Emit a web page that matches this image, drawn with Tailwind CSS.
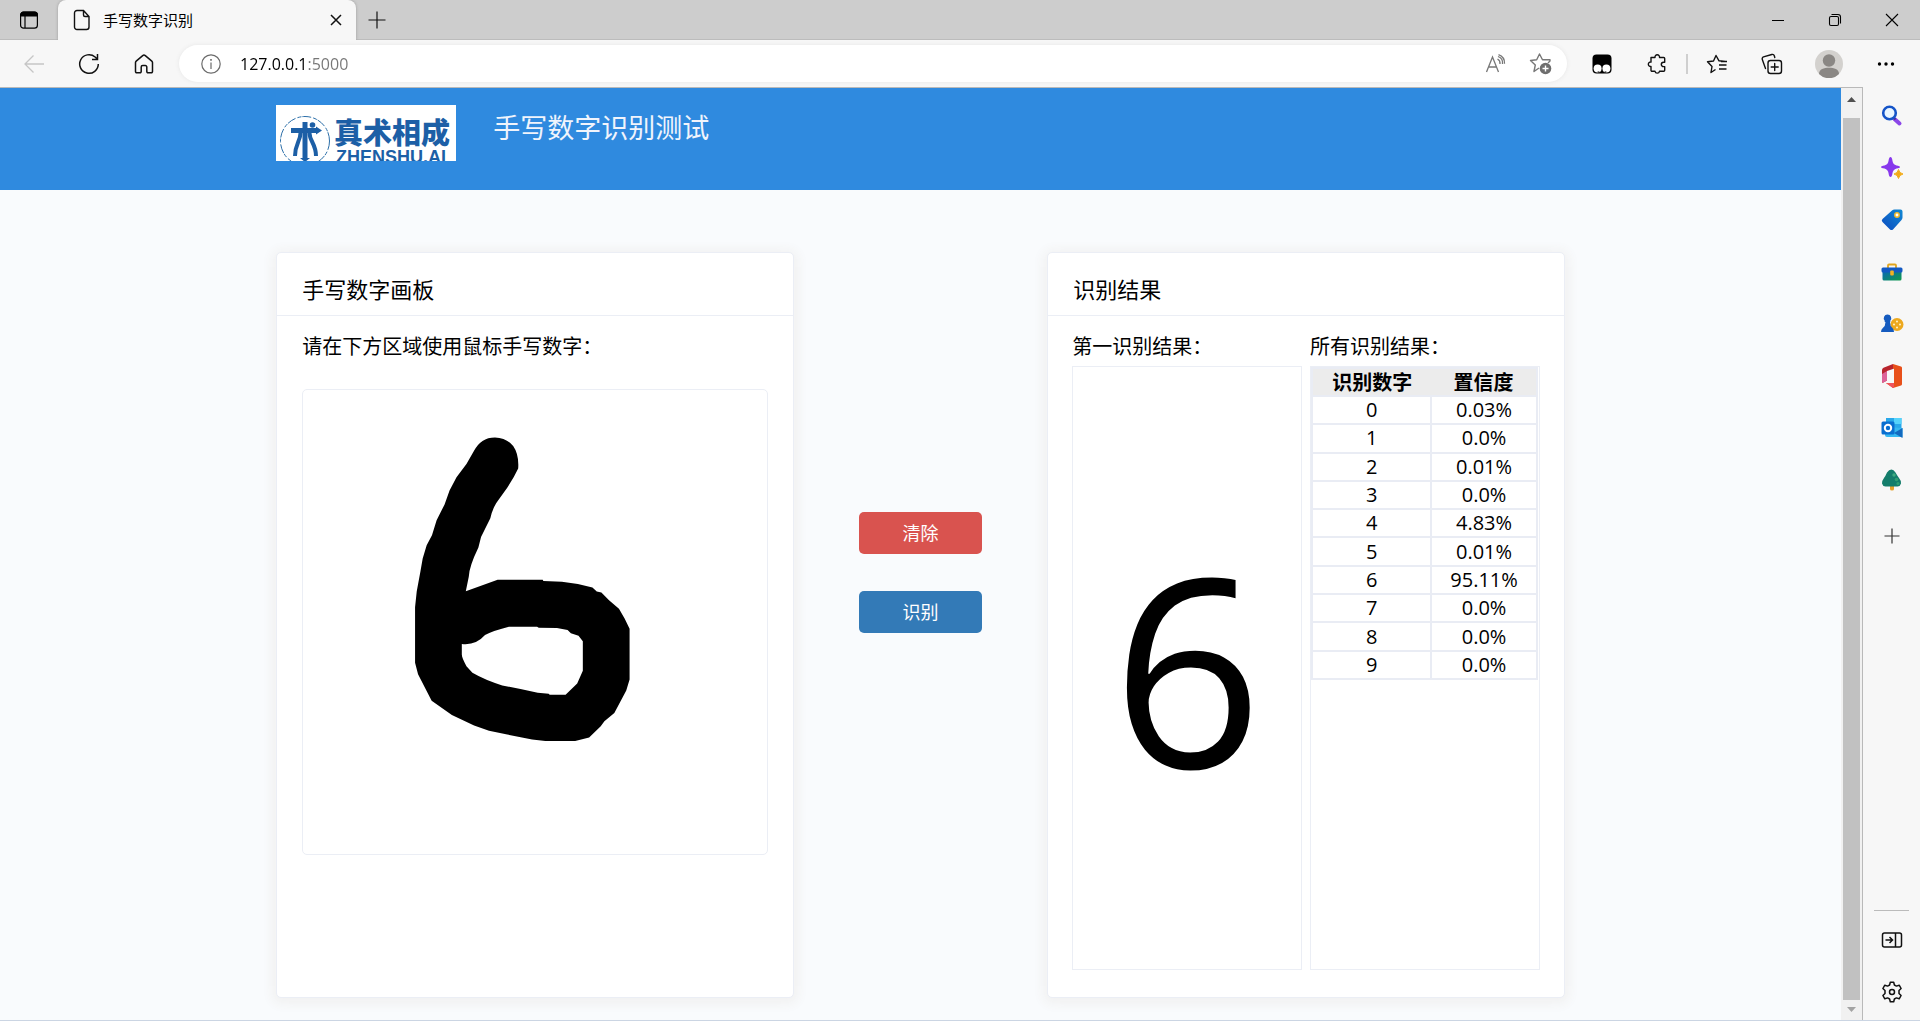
<!DOCTYPE html>
<html lang="zh-CN">
<head>
<meta charset="utf-8">
<meta name="viewport" content="width=device-width, initial-scale=1">
<title>手写数字识别</title>
<script src="https://cdn.jsdelivr.net/npm/@tailwindcss/browser@4"></script>
</head>
<body class="flex h-screen flex-col overflow-hidden bg-[#f7f7f7] font-['Open_Sans','Noto_Sans_CJK_SC',sans-serif] text-black">

<!-- Tab strip -->
<div class="flex h-10 shrink-0 items-stretch bg-[#cdcdcd] shadow-[inset_0_-1px_0_#bcbcbc]">
  <button aria-label="标签页操作" class="flex w-[58px] items-center justify-center">
    <svg width="20" height="20" viewBox="0 0 20 20" fill="none" stroke="#000" stroke-width="1.2"><rect x="1.6" y="2.2" width="16.8" height="16" rx="3"/><path d="M1.6 6V5a3 3 0 0 1 3-3h10.800a3 3 0 0 1 3 3v1z" fill="#000"/><path d="M6 6v12"/></svg>
  </button>
  <div class="flex w-[298px] items-center rounded-t-lg bg-[#f7f7f7] pr-2 pl-[15px] shadow-[0_0_3px_#999] [clip-path:inset(0_-4px_0_-4px)]">
    <svg class="shrink-0" width="18" height="22" viewBox="0 0 18 22" fill="none" stroke="#111" stroke-width="1.4"><path d="M4 1.500h6.500l5.500 6V18a2.500 2.500 0 0 1-2.500 2.500H4A2.500 2.500 0 0 1 1.500 18V4A2.500 2.500 0 0 1 4 1.500zM10.500 1.500v4.500a1.500 1.500 0 0 0 1.500 1.500h4"/></svg>
    <span class="flex-1 pl-3 text-[15px] leading-5">手写数字识别</span>
    <button aria-label="关闭标签页" class="flex size-6 items-center justify-center">
      <svg width="12" height="12" viewBox="0 0 12 12" stroke="#111" stroke-width="1.500"><path d="M1 1l10 10M11 1L1 11"/></svg>
    </button>
  </div>
  <button aria-label="新建标签页" class="flex w-[42px] items-center justify-center">
    <svg width="18" height="18" viewBox="0 0 18 18" stroke="#111" stroke-width="1.200"><path d="M9 .5v17M.5 9h17"/></svg>
  </button>
  <div class="flex flex-1 justify-end">
    <button aria-label="最小化" class="flex w-[57px] items-center justify-center"><svg width="12" height="12" viewBox="0 0 12 12" stroke="#000"><path d="M0 6.500h12"/></svg></button>
    <button aria-label="还原" class="flex w-[57px] items-center justify-center"><svg width="14" height="14" viewBox="0 0 14 14" fill="none" stroke="#000" stroke-width="1.100"><rect x="1.500" y="3.500" width="9" height="9" rx="1.500"/><path d="M3.500 1.500h6.500a2.500 2.500 0 0 1 2.500 2.500v6.500"/></svg></button>
    <button aria-label="关闭" class="flex w-[57px] items-center justify-center"><svg width="14" height="14" viewBox="0 0 14 14" stroke="#000" stroke-width="1.100"><path d="M1 1l12 12M13 1L1 13"/></svg></button>
  </div>
</div>

<!-- Toolbar -->
<div class="flex h-[47px] shrink-0 items-center gap-[15px] px-[14px]">
  <button aria-label="后退" class="flex w-10 justify-center"><svg width="22" height="20" viewBox="0 0 22 20" fill="none" stroke="#c6c6c6" stroke-width="1.300"><path d="M21 10H2M10.500 1.500L2 10l8.500 8.500"/></svg></button>
  <button aria-label="刷新" class="flex w-10 justify-center"><svg width="22" height="22" viewBox="0 0 22 22" fill="none" stroke="#111" stroke-width="1.500"><path d="M20.300 11a9.300 9.300 0 1 1-3.200-7l2.400 2.300M19.500 1v5.500H14"/></svg></button>
  <button aria-label="主页" class="flex w-10 justify-center"><svg width="20" height="20" viewBox="0 0 20 20" fill="none" stroke="#111" stroke-width="1.500" stroke-linejoin="round"><path d="M1.500 8.600a2 2 0 0 1 .700-1.500L8.700 1.600a2 2 0 0 1 2.600 0l6.500 5.500a2 2 0 0 1 .700 1.500v8.900a1.200 1.200 0 0 1-1.200 1.200H14a1.200 1.200 0 0 1-1.200-1.200V13a1.500 1.500 0 0 0-1.500-1.500H8.700A1.500 1.500 0 0 0 7.200 13v4.500A1.200 1.200 0 0 1 6 18.700H2.700a1.200 1.200 0 0 1-1.200-1.200z"/></svg></button>
  <div class="flex h-[37px] flex-1 items-center rounded-full bg-white pr-[14px] pl-[22px] shadow-[0_0_4px_#e6e6e6]">
    <svg class="shrink-0" width="20" height="20" viewBox="0 0 20 20" fill="none" stroke="#6b6b6b" stroke-width="1.200"><circle cx="10" cy="10" r="9.200"/><path d="M10 8.500v6.500"/><path d="M10 5v1.700" stroke-width="1.600"/></svg>
    <input type="text" aria-label="地址栏" value="127.0.0.1:5000" class="ml-[19px] h-6 min-w-0 flex-1 bg-[linear-gradient(to_right,#000_66px,#767676_66px)] bg-clip-text text-base text-transparent outline-none">
    <button aria-label="朗读此页" class="mr-[22px]"><svg width="22" height="20" viewBox="0 0 22 20" fill="none" stroke="#777" stroke-width="1.300"><path d="M1.500 18L7.500 3l6 15M3.500 13h8M12.500 5a5 5 0 0 1 2.500 5M13 2.500a7 7 0 0 1 4.500 7.500M13.500 .7a9 9 0 0 1 6 9"/></svg></button>
    <button aria-label="收藏此页"><svg width="24" height="24" viewBox="0 0 24 24" fill="none" stroke="#777" stroke-width="1.400" stroke-linejoin="round"><path d="M10 16l-5 3.500 1.300-6.500L1.500 8.500l6.200-.700L10.500 2l3 5.800h7.500v1.200l-2 2"/><circle cx="16.500" cy="16.500" r="5.800" fill="#6e6e6e" stroke="none"/><path d="M16.500 13.500v6M13.500 16.500h6" stroke="#fff"/></svg></button>
  </div>
  <button aria-label="篡改猴" class="flex w-10 justify-center"><svg width="20" height="20" viewBox="0 0 20 20"><rect x=".5" y=".5" width="19" height="19" rx="4"/><circle cx="5.600" cy="14.500" r="4" fill="#fff"/><circle cx="14.400" cy="14.500" r="4" fill="#fff"/><path d="M5.500 17.500a1 1 0 1 0 2 0M12.500 17.500a1 1 0 1 0 2 0"/></svg></button>
  <div class="flex items-center gap-[9px]">
    <button aria-label="扩展" class="flex w-10 justify-center"><svg width="20" height="20" viewBox="0 0 20 20" fill="none" stroke="#111" stroke-width="1.400" stroke-linejoin="round"><path d="M4 3.500h4a2.300 2.300 0 1 1 4.500 0h4.200a1 1 0 0 1 1 1v3.700h-1.200a2.200 2.200 0 0 0 0 4.400h1.200v3.700a1 1 0 0 1-1 1h-4.200a2.300 2.300 0 0 1-4.500 0H5a1 1 0 0 1-1-1v-3.900a2.200 2.200 0 1 1 0-4.300z"/></svg></button>
    <div class="h-5 w-0.5 bg-[#cfcfcf]"></div>
    <button aria-label="收藏夹" class="flex w-10 justify-center"><svg width="22" height="20" viewBox="0 0 22 20" fill="none" stroke="#111" stroke-width="1.400" stroke-linejoin="round"><path d="M9.500 15.500L5 18.500l1-6-4.500-4.700 6-.800L10 1.500l3 5.300 6.500.700M13 11h7.500M13 15h7.500M15 7.500h6"/></svg></button>
  </div>
  <button aria-label="集锦" class="flex w-10 justify-center"><svg width="22" height="22" viewBox="0 0 22 22" fill="none" stroke="#111" stroke-width="1.400" stroke-linecap="round"><rect x="7" y="7.500" width="13.500" height="13" rx="2.500"/><path d="M13.700 10.500v7M10.200 14h7M4.500 15.500L1.300 6.500a2 2 0 0 1 1.200-2.600L10.800 1.500a2 2 0 0 1 2.500 1.300l.5 1.700"/></svg></button>
  <button aria-label="个人资料" class="flex w-11 justify-center"><svg width="28" height="28" viewBox="0 0 28 28"><circle cx="14" cy="14" r="14" fill="#d3d1ce"/><circle cx="14" cy="10.500" r="6.200" fill="#8a8784"/><path d="M4 24c0-5 5-6.300 10-6.300S24 19 24 24a14 14 0 0 1-20 0z" fill="#8a8784"/></svg></button>
  <button aria-label="设置及其他" class="flex w-10 justify-center"><svg width="18" height="4" viewBox="0 0 18 4"><circle cx="2.500" cy="2" r="1.700"/><circle cx="9" cy="2" r="1.700"/><circle cx="15.500" cy="2" r="1.700"/></svg></button>
</div>

<div class="flex min-h-0 flex-1 border-b border-[#cbd5e3]">
  <!-- Web page -->
  <div class="flex min-w-0 flex-1 border-t border-r border-[#b9b9b9]">
    <div class="flex min-w-0 flex-1 flex-col bg-[#f9fbfd]">
      <header class="flex h-[102px] shrink-0 items-start bg-[#2f8adf] px-[15%] pt-[17px]">
        <svg class="h-14 w-[180px] shrink-0 bg-white" viewBox="0 0 180 56" role="img" aria-label="真术相成 ZHENSHU.AI">
          <circle cx="29" cy="36" r="24.500" fill="none" stroke="#2c6fa9" stroke-width="1" stroke-dasharray="9 2 4 1"/>
          <g fill="none" stroke="#1c5fa6" stroke-width="5"><path d="M15 25.500h25"/><path d="M29 17v36"/><path d="M24.500 28c0 8-5.500 11-5.500 23M33.500 28c0 8 6.500 11 6.500 23" stroke-width="4"/></g>
          <path d="M40 21.500l6 4-6 4zM24 53h10l-5 4z" fill="#1c5fa6"/><circle cx="36.500" cy="20" r="2.800" fill="#1c5fa6"/>
          <text x="58" y="39" class="fill-[#1c5fa6] font-['Noto_Sans_CJK_SC',sans-serif] text-[29px] font-black">真术相成</text>
          <text x="60" y="58" class="fill-[#1c5fa6] font-['Liberation_Sans',sans-serif] text-[18px] font-bold">ZHENSHU.AI</text>
        </svg>
        <h1 class="pt-[3px] pl-[37px] text-[27px] leading-10 whitespace-nowrap text-[#f0f4fc]">手写数字识别测试</h1>
      </header>

      <main class="grid min-h-0 flex-1 grid-cols-[2.04fr_1fr_2.04fr] px-[15%] pt-[62px] pb-[22px]">
        <section class="flex min-w-0 flex-col rounded-[5px] border border-[#ebeef5] bg-white shadow-[0_2px_12px_4px_#f1f1f1]">
          <h2 class="border-b border-[#ebeef5] px-[25px] pt-5 pb-[10px] text-[22px] leading-8">手写数字画板</h2>
          <div class="px-[25px] pt-[17px]">
            <p class="text-xl leading-7">请在下方区域使用鼠标手写数字：</p>
            <div class="mt-7 aspect-square rounded-[5px] border border-[#ebeef5]">
              <svg class="size-full" viewBox="0 0 466 466" role="img" aria-label="手写数字">
                <path transform="translate(77 21) scale(.33333)" fill-rule="evenodd" d="M284 122Q305 80 348 80Q385 82 403 106Q421 132 418 174Q405 202 386 230L352 278Q338 302 334 324L306 380L298 412Q270 470 269 500L260 544L356 509H492L494 513L550 515L598 522L642 533L655 545L669 548L692 571L722 597L739 626L754 657V810L744 843L708 911L678 936L667 951L632 985L590 996H500L460 991L385 976L330 965L285 949L218 917L157 874L116 794L107 760V592L112 545L123 485L130 445L142 405L158 375L172 330L196 282L211 240L232 200L262 160ZM248 703Q290 708 318 676Q345 662 390 651H475L480 654L535 655L567 661L577 671L600 678L613 695V784L596 822L561 856H513L510 853L477 850L425 839L370 828Q320 813 280 790L262 770Q248 745 248 735Z"/>
              </svg>
            </div>
          </div>
        </section>

        <div class="flex flex-col items-center gap-[37px] pt-[260px]">
          <button class="h-[42px] w-[123px] rounded-[5px] bg-[#d9534f] text-lg text-white">清除</button>
          <button class="h-[42px] w-[123px] rounded-[5px] bg-[#337ab7] text-lg text-white">识别</button>
        </div>

        <section class="flex min-w-0 flex-col rounded-[5px] border border-[#ebeef5] bg-white shadow-[0_2px_12px_4px_#f1f1f1]">
          <h2 class="border-b border-[#ebeef5] px-[25px] pt-5 pb-[10px] text-[22px] leading-8">识别结果</h2>
          <div class="grid min-h-0 flex-1 grid-cols-2 gap-2 px-[24px] pt-[17px] pb-[27px]">
            <div class="flex min-w-0 flex-col">
              <p class="text-xl leading-7">第一识别结果：</p>
              <div class="mt-[5px] flex flex-1 items-center justify-center border border-[#ebeef5] pb-1 text-[263px] leading-none font-medium">6</div>
            </div>
            <div class="flex min-w-0 flex-col">
              <p class="text-xl leading-7">所有识别结果：</p>
              <div class="mt-[5px] flex-1 border border-[#ebeef5] pr-px">
                <table class="h-[313px] w-full border-collapse border-2 border-[#e9ecf4] text-center text-xl leading-6">
                  <thead class="bg-[#ececec]">
                    <tr><th scope="col" class="w-[53%] pt-0.5 font-bold">识别数字</th><th scope="col" class="pt-0.5 font-bold">置信度</th></tr>
                  </thead>
                  <tbody>
                    <tr><td class="border-2 border-[#e9ecf4] p-0">0</td><td class="border-2 border-[#e9ecf4] p-0">0.03%</td></tr>
                    <tr><td class="border-2 border-[#e9ecf4] p-0">1</td><td class="border-2 border-[#e9ecf4] p-0">0.0%</td></tr>
                    <tr><td class="border-2 border-[#e9ecf4] p-0">2</td><td class="border-2 border-[#e9ecf4] p-0">0.01%</td></tr>
                    <tr><td class="border-2 border-[#e9ecf4] p-0">3</td><td class="border-2 border-[#e9ecf4] p-0">0.0%</td></tr>
                    <tr><td class="border-2 border-[#e9ecf4] p-0">4</td><td class="border-2 border-[#e9ecf4] p-0">4.83%</td></tr>
                    <tr><td class="border-2 border-[#e9ecf4] p-0">5</td><td class="border-2 border-[#e9ecf4] p-0">0.01%</td></tr>
                    <tr><td class="border-2 border-[#e9ecf4] p-0">6</td><td class="border-2 border-[#e9ecf4] p-0">95.11%</td></tr>
                    <tr><td class="border-2 border-[#e9ecf4] p-0">7</td><td class="border-2 border-[#e9ecf4] p-0">0.0%</td></tr>
                    <tr><td class="border-2 border-[#e9ecf4] p-0">8</td><td class="border-2 border-[#e9ecf4] p-0">0.0%</td></tr>
                    <tr><td class="border-2 border-[#e9ecf4] p-0">9</td><td class="border-2 border-[#e9ecf4] p-0">0.0%</td></tr>
                  </tbody>
                </table>
              </div>
            </div>
          </div>
        </section>
      </main>
    </div>

    <!-- Scrollbar -->
    <div class="flex w-[21px] shrink-0 flex-col items-center bg-[#f1f1f1]">
      <svg class="shrink-0" width="17" height="30" viewBox="0 0 17 30"><path d="M4 14l4.500-5 4.500 5z" fill="#505050"/></svg>
      <div class="w-[17px] flex-1 bg-[#c1c1c1]"></div>
      <svg class="shrink-0" width="17" height="20" viewBox="0 0 17 20"><path d="M4 7l4.500 5L13 7z" fill="#a3a3a3"/></svg>
    </div>
  </div>

  <!-- Edge sidebar -->
  <nav aria-label="边栏" class="flex w-[57px] shrink-0 flex-col items-center bg-[#f7f7f7] pt-[3px]">
    <button aria-label="搜索" class="flex h-[52px] items-center"><svg width="22" height="22" viewBox="0 0 22 22" fill="none"><path d="M13.500 14l5 4.500" stroke="#8b46e8" stroke-width="4" stroke-linecap="round"/><path d="M12.500 12.500l2 2" stroke="#45308f" stroke-width="2"/><circle cx="8.500" cy="8" r="6.300" fill="#eaf6ff" stroke="#1554c8" stroke-width="2.600"/></svg></button>
    <button aria-label="发现" class="flex h-[52px] items-center"><svg width="22" height="22" viewBox="0 0 22 22"><path d="M9.500 0q1.500 0 2 4 .500 3.500 4 4.500 3.500.500 3.500 1.500t-3.500 1.500q-3.500 1-4 4.500-.500 4-2 4t-2-4q-.500-3.500-4-4.500Q0 11 0 10t3.500-1.500q3.500-1 4-4.500.500-4 2-4z" fill="#8738ec"/><path d="M17.500 12.500q.700 3.800 4.500 4.500-3.800.700-4.500 4.500-.700-3.800-4.500-4.500 3.800-.700 4.500-4.500z" fill="#f2aa17" stroke="#f2aa17"/></svg></button>
    <button aria-label="购物" class="flex h-[52px] items-center"><svg width="22" height="22" viewBox="0 0 22 22"><defs><linearGradient id="tag" x1="1" y1="0" x2="0" y2="1"><stop stop-color="#1188d3"/><stop offset="1" stop-color="#0d4bc0"/></linearGradient></defs><path d="M11 1.500q1-.9 2.500-.9h6q2 0 2 2v6q0 1.300-1 2.300l-8.500 9.500q-1.500 1.300-3 0l-7.500-7.500q-1.500-1.500 0-3z" fill="url(#tag)"/><circle cx="16" cy="6" r="2.200" fill="#fff" stroke="#f1b82a" stroke-width="1.500"/></svg></button>
    <button aria-label="工具" class="flex h-[52px] items-center"><svg width="22" height="22" viewBox="0 0 22 22"><defs><linearGradient id="box" x1="0" y1="0" x2="1" y2="1"><stop stop-color="#0a66b8"/><stop offset="1" stop-color="#0f9a4a"/></linearGradient></defs><path d="M7 7V4.500Q7 3.500 8 3.500h6q1 0 1 1V7" fill="none" stroke="#e2a51c" stroke-width="1.800"/><path d="M1.500 10h19v8q0 1.500-1.500 1.500H3q-1.500 0-1.500-1.500z" fill="url(#box)"/><rect x=".5" y="6.500" width="21" height="5" rx="1.500" fill="#1259c3"/><rect x="9.200" y="9.500" width="3.600" height="5" rx="1" fill="#f1b223"/></svg></button>
    <button aria-label="游戏" class="flex h-[52px] items-center"><svg width="24" height="22" viewBox="0 0 24 22"><circle cx="17" cy="11.500" r="6.500" fill="#eda91f"/><g fill="#fff3cc"><circle cx="17" cy="8.500" r="1"/><circle cx="17" cy="14.500" r="1"/><circle cx="14" cy="11.500" r="1"/><circle cx="20" cy="11.500" r="1"/></g><path d="M7.500 1.500a3.700 3.700 0 0 1 2.800 6.200V9H10q0 4 2.500 6 1.500 1.500 1.500 4H1q0-2.500 1.800-4Q5.500 13 5.500 9h-.8V7.700A3.700 3.700 0 0 1 7.500 1.500z" fill="#155bbf"/></svg></button>
    <button aria-label="Microsoft 365" class="flex h-[52px] items-center"><svg width="22" height="24" viewBox="0 0 22 24"><path d="M12 0l8 2.500q1 .3 1 1.500v16q0 1.200-1 1.500L12 24l-7-5h8V5l-1-.3z" fill="#e8501a"/><path d="M12 0v5L6 7v9.500L1.500 19Q1 18 1 16V6q0-1.500 1.500-2.200z" fill="#b8242c"/><path d="M1 10l5-3v9.500L1.500 19Q1 18 1 16z" fill="#dd6398"/><path d="M5 19h8v5h-1z" fill="#f0525c"/></svg></button>
    <button aria-label="Outlook" class="flex h-[52px] items-center"><svg width="22" height="22" viewBox="0 0 22 22"><path d="M5 1h15.500v10H5z" fill="#29a8ea"/><path d="M13 1h7.500v6H13z" fill="#55d3fb"/><path d="M4 10l17.500 1v9H6q-2 0-2-2z" fill="#35b8f1"/><path d="M21.500 11L13 16l8.500 5z" fill="#136abf"/><rect x=".5" y="4.500" width="13" height="13" rx="1.500" fill="#0a6fd0"/><circle cx="7" cy="11" r="3.200" fill="none" stroke="#fff" stroke-width="2"/></svg></button>
    <button aria-label="环保" class="flex h-[52px] items-center"><svg width="22" height="22" viewBox="0 0 22 22"><path d="M9 15h4v5q0 1.500-2 1.500T9 20z" fill="#e7a12a"/><path d="M10.500.5q2 0 4 3 2 3.500 3.500 5.500 2.500 3 2 5.500-.500 2.500-3.500 3H4.500q-3-.500-3.500-3Q.7 12 3 9q1.500-2 3-5.500 2-3 4.500-3z" fill="#147d6b"/><circle cx="13" cy="6" r="1.700" fill="#3dab80"/><circle cx="15.500" cy="10.500" r="1.800" fill="#2f9f72"/><circle cx="17" cy="14.500" r="1.500" fill="#2f9f72"/></svg></button>
    <button aria-label="添加" class="flex h-[60px] items-center"><svg width="16" height="16" viewBox="0 0 16 16" stroke="#333" stroke-width="1.200"><path d="M8 .5v15M.5 8h15"/></svg></button>
    <div class="flex-1"></div>
    <div class="h-px w-[35px] bg-[#bbb]"></div>
    <button aria-label="隐藏边栏" class="flex h-[58px] items-center"><svg width="22" height="18" viewBox="0 0 22 18" fill="none" stroke="#111" stroke-width="1.500"><rect x="1.500" y="2" width="19" height="14" rx="2"/><path d="M14.500 2v14M4.500 9h7M8.500 6l3 3-3 3"/></svg></button>
    <button aria-label="设置" class="mb-[5px] flex h-[46px] items-center"><svg width="22" height="22" viewBox="0 0 22 22" fill="none" stroke="#111" stroke-width="1.500" stroke-linejoin="round"><path d="M9.300 1.200h3.400l.7 2.800 2 1.100 2.800-.9 1.900 3.300-2.100 2v3l2.100 2-1.900 3.300-2.800-.9-2 1.100-.7 2.800H9.300L8.600 18l-2-1.100-2.800.9-1.900-3.300 2.100-2v-3l-2.100-2 1.900-3.300 2.800.9 2-1.100z"/><circle cx="11" cy="11" r="2.500"/></svg></button>
  </nav>
</div>
</body>
</html>
